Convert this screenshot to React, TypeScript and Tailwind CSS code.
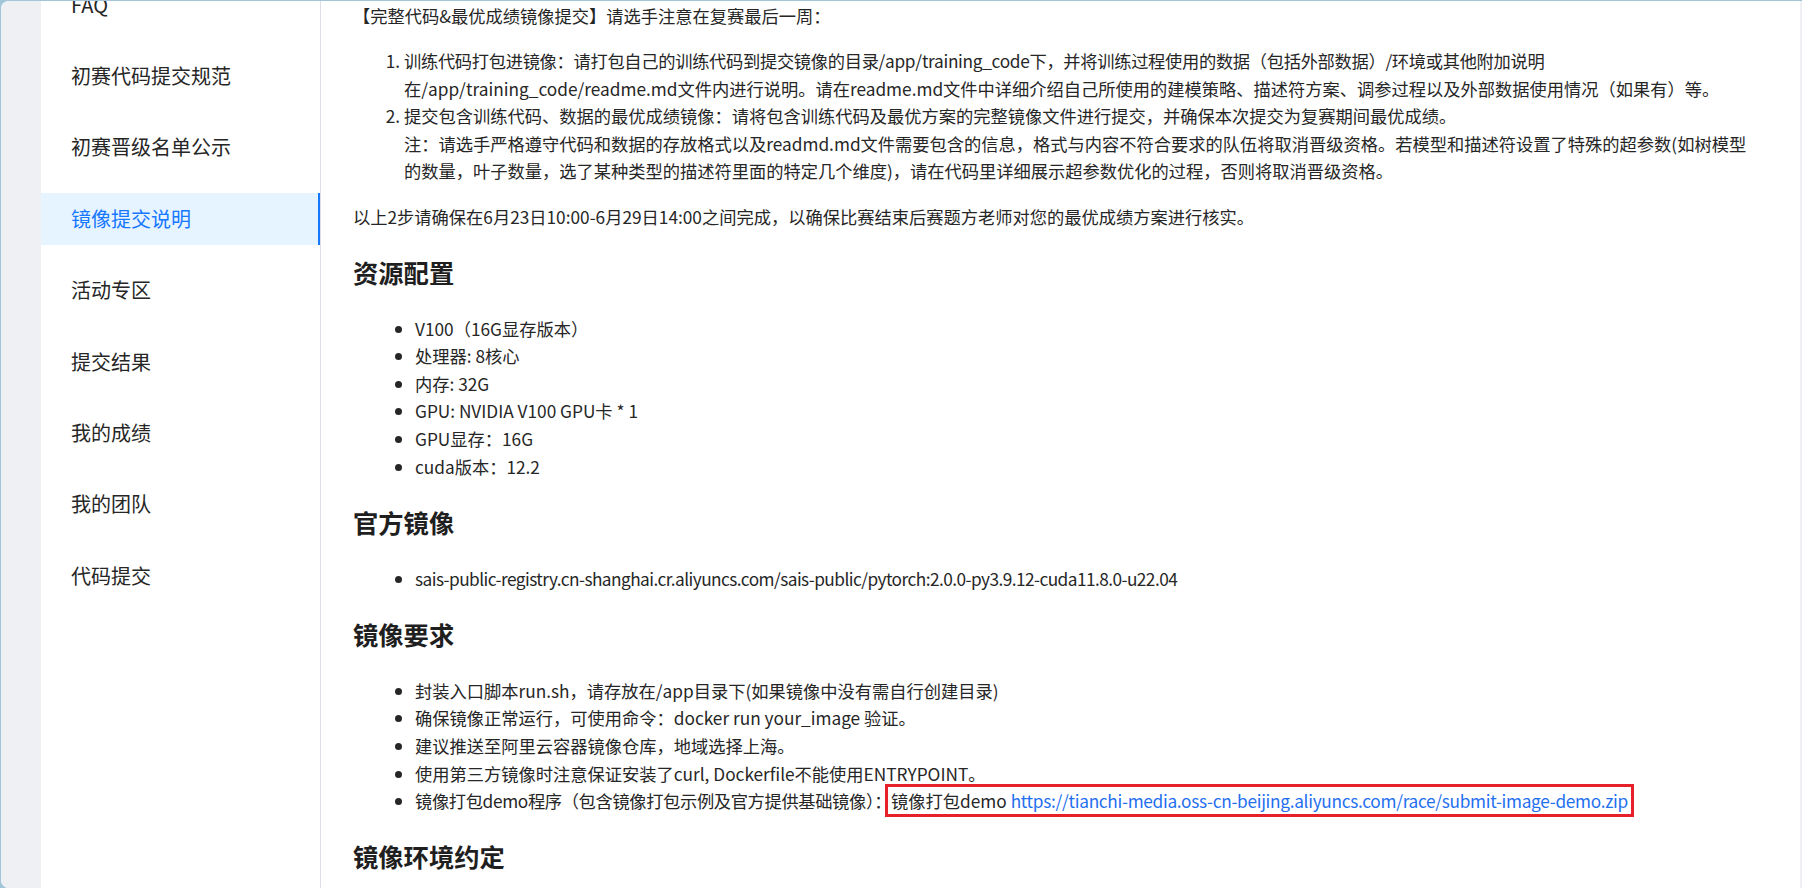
import React from 'react'

const menu = [
  'FAQ',
  '初赛代码提交规范',
  '初赛晋级名单公示',
  '镜像提交说明',
  '活动专区',
  '提交结果',
  '我的成绩',
  '我的团队',
  '代码提交',
]

const resources = [
  'V100（16G显存版本）',
  '处理器: 8核心',
  '内存: 32G',
  'GPU: NVIDIA V100 GPU卡 * 1',
  'GPU显存：16G',
  'cuda版本：12.2',
]

function Heading({ children }: { children: React.ReactNode }) {
  return (
    <h3 className="mt-[23.5px] mb-[25px] text-[25.3px] leading-[36px] font-bold text-[#1f1f1f]">
      {children}
    </h3>
  )
}

export default function App() {
  return (
    <div className="h-[888px] w-full overflow-hidden bg-[#a3c5da] pt-[1px] pl-[1px] font-[Noto_Sans_CJK_SC,sans-serif]">
      <div className="flex h-full overflow-hidden rounded-l-[8px] bg-white">
        {/* left rail */}
        <div className="w-[40px] shrink-0 bg-[#eef0f4]" />

        {/* side menu */}
        <aside className="w-[280px] shrink-0 border-r border-[#dcdfe6] bg-white">
          <ul className="mt-[-22px] flex flex-col gap-[20px]">
            {menu.map((item) => {
              const active = item === '镜像提交说明'
              return (
                <li
                  key={item}
                  className={
                    active
                      ? 'flex h-[51.4px] items-center border-r-2 border-[#1677ff] bg-[#e6f4ff] pl-[30px] text-[20px] text-[#1677ff]'
                      : 'flex h-[51.4px] items-center pl-[30px] text-[20px] text-[#262626]'
                  }
                >
                  {item}
                </li>
              )
            })}
          </ul>
        </aside>

        {/* content */}
        <main className="min-w-0 flex-1 pt-[1px] pl-[32px] text-[17.25px] leading-[27.6px] whitespace-nowrap text-[#262626]">
          <p>【完整代码&amp;最优成绩镜像提交】请选手注意在复赛最后一周：</p>

          <ol className="my-[17.5px] list-decimal pl-[51px]">
            <li>
              <span className="tracking-[-0.3px]">
                训练代码打包进镜像：请打包自己的训练代码到提交镜像的目录/app/training_code下，并将训练过程使用的数据（包括外部数据）/环境或其他附加说明
              </span>
              <br />
              在/app/training_code/readme.md文件内进行说明。请在readme.md文件中详细介绍自己所使用的建模策略、描述符方案、调参过程以及外部数据使用情况（如果有）等。
            </li>
            <li>
              提交包含训练代码、数据的最优成绩镜像：请将包含训练代码及最优方案的完整镜像文件进行提交，并确保本次提交为复赛期间最优成绩。
              <br />
              注：请选手严格遵守代码和数据的存放格式以及readmd.md文件需要包含的信息，格式与内容不符合要求的队伍将取消晋级资格。若模型和描述符设置了特殊的超参数(如树模型
              <br />
              的数量，叶子数量，选了某种类型的描述符里面的特定几个维度)，请在代码里详细展示超参数优化的过程，否则将取消晋级资格。
            </li>
          </ol>

          <p>以上2步请确保在6月23日10:00-6月29日14:00之间完成，以确保比赛结束后赛题方老师对您的最优成绩方案进行核实。</p>

          <Heading>资源配置</Heading>
          <ul className="list-disc pl-[62px]">
            {resources.map((r) => (
              <li key={r}>{r}</li>
            ))}
          </ul>

          <Heading>官方镜像</Heading>
          <ul className="list-disc pl-[62px]">
            <li>
              <span className="tracking-[-0.55px]">
                sais-public-registry.cn-shanghai.cr.aliyuncs.com/sais-public/pytorch:2.0.0-py3.9.12-cuda11.8.0-u22.04
              </span>
            </li>
          </ul>

          <Heading>镜像要求</Heading>
          <ul className="list-disc pl-[62px]">
            <li>封装入口脚本run.sh，请存放在/app目录下(如果镜像中没有需自行创建目录)</li>
            <li>确保镜像正常运行，可使用命令：docker run your_image 验证。</li>
            <li>建议推送至阿里云容器镜像仓库，地域选择上海。</li>
            <li>使用第三方镜像时注意保证安装了curl, Dockerfile不能使用ENTRYPOINT。</li>
            <li>
              <span className="tracking-[-0.35px]">镜像打包demo程序（包含镜像打包示例及官方提供基础镜像）：</span>
              <span className="relative">
                镜像打包demo{' '}
                <a className="tracking-[-0.3px] text-[#1f6fef]">
                  https://tianchi-media.oss-cn-beijing.aliyuncs.com/race/submit-image-demo.zip
                </a>
                {/* annotation box drawn over the link */}
                <span className="pointer-events-none absolute -top-[4px] -bottom-[4px] -left-[6px] -right-[6px] border-[3px] border-[#e8202a]" />
              </span>
            </li>
          </ul>

          <Heading>镜像环境约定</Heading>
        </main>

        {/* scrollbar edge */}
        <div className="w-[2px] shrink-0 bg-[#eef0f4]" />
      </div>
    </div>
  )
}
